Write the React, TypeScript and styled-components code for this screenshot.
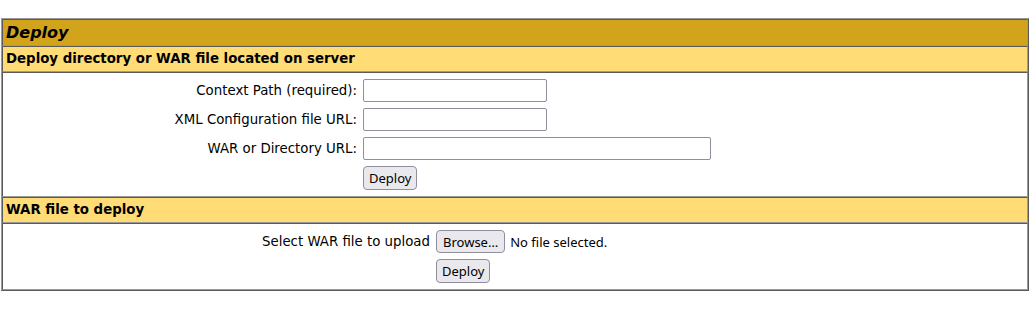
import React from "react";
import styled, { createGlobalStyle } from "styled-components";

const Global = createGlobalStyle`
  html, body { margin: 0; padding: 0; background: #fff; }
  body { font-family: "DejaVu Sans", sans-serif; color: #000; }
  #root { padding: 18px 5px 0 1px; }
`;

const Panel = styled.div`
  display: flex;
  flex-direction: column;
  border-style: solid;
  border-width: 1px;
  border-color: #9a9a9a #5a5a5a #5a5a5a #9a9a9a;
`;

const Cell = styled.div<{ $bg?: string }>`
  border-style: solid;
  border-width: 1px;
  border-color: #5a5a5a #9a9a9a #9a9a9a #5a5a5a;
  padding: 3px;
  background: ${(p) => p.$bg || "#fff"};
`;

const Title = styled(Cell)`
  font-size: 16px;
  line-height: 19px;
  font-weight: bold;
  font-style: italic;
`;

const Header = styled(Cell)`
  font-size: 13.33px;
  line-height: 18px;
  font-weight: bold;
`;

const FormGrid = styled.div<{ $labelWidth: number }>`
  display: grid;
  grid-template-columns: ${(p) => p.$labelWidth}px 1fr;
  align-items: start;
`;

const Label = styled.div`
  padding: 3px;
  text-align: right;
  font-size: 13.33px;
  line-height: 23px;
  white-space: nowrap;
`;

const Field = styled.div`
  padding: 3px;
  display: flex;
  align-items: center;
  gap: 5px;
`;

const TextInput = styled.input<{ $w: number }>`
  box-sizing: border-box;
  width: ${(p) => p.$w}px;
  height: 23px;
  margin: 0;
  border: 1px solid #8f8f9d;
  border-radius: 2px;
  background: #fff;
  padding: 2px 4px;
  font: 13px "Noto Sans", sans-serif;
`;

const Button = styled.button<{ $h?: number; $px?: number }>`
  box-sizing: border-box;
  height: ${(p) => p.$h ?? 23}px;
  margin: 0;
  padding: 0 ${(p) => p.$px ?? 5}px;
  border: 1px solid #8f8f9d;
  border-radius: 4px;
  background: #e9e9ed;
  color: #000;
  font: 13px "Noto Sans", sans-serif;
  line-height: 20px;
`;

const FileName = styled.span`
  font: 13px "Noto Sans", sans-serif;
  white-space: nowrap;
`;

export default function App() {
  return (
    <>
      <Global />
      <Panel>
        <Title $bg="#D2A41C">Deploy</Title>
        <Header $bg="#FFDC75">Deploy directory or WAR file located on server</Header>
        <Cell>
          <FormGrid $labelWidth={354}>
            <Label>Context Path (required):</Label>
            <Field>
              <TextInput $w={184} type="text" />
            </Field>
            <Label>XML Configuration file URL:</Label>
            <Field>
              <TextInput $w={184} type="text" />
            </Field>
            <Label>WAR or Directory URL:</Label>
            <Field>
              <TextInput $w={348} type="text" />
            </Field>
            <Label />
            <Field>
              <Button $h={24}>Deploy</Button>
            </Field>
          </FormGrid>
        </Cell>
        <Header $bg="#FFDC75">WAR file to deploy</Header>
        <Cell>
          <FormGrid $labelWidth={427}>
            <Label>Select WAR file to upload</Label>
            <Field>
              <Button $px={6}>Browse…</Button>
              <FileName>No file selected.</FileName>
            </Field>
            <Label />
            <Field>
              <Button $h={24}>Deploy</Button>
            </Field>
          </FormGrid>
        </Cell>
      </Panel>
    </>
  );
}
